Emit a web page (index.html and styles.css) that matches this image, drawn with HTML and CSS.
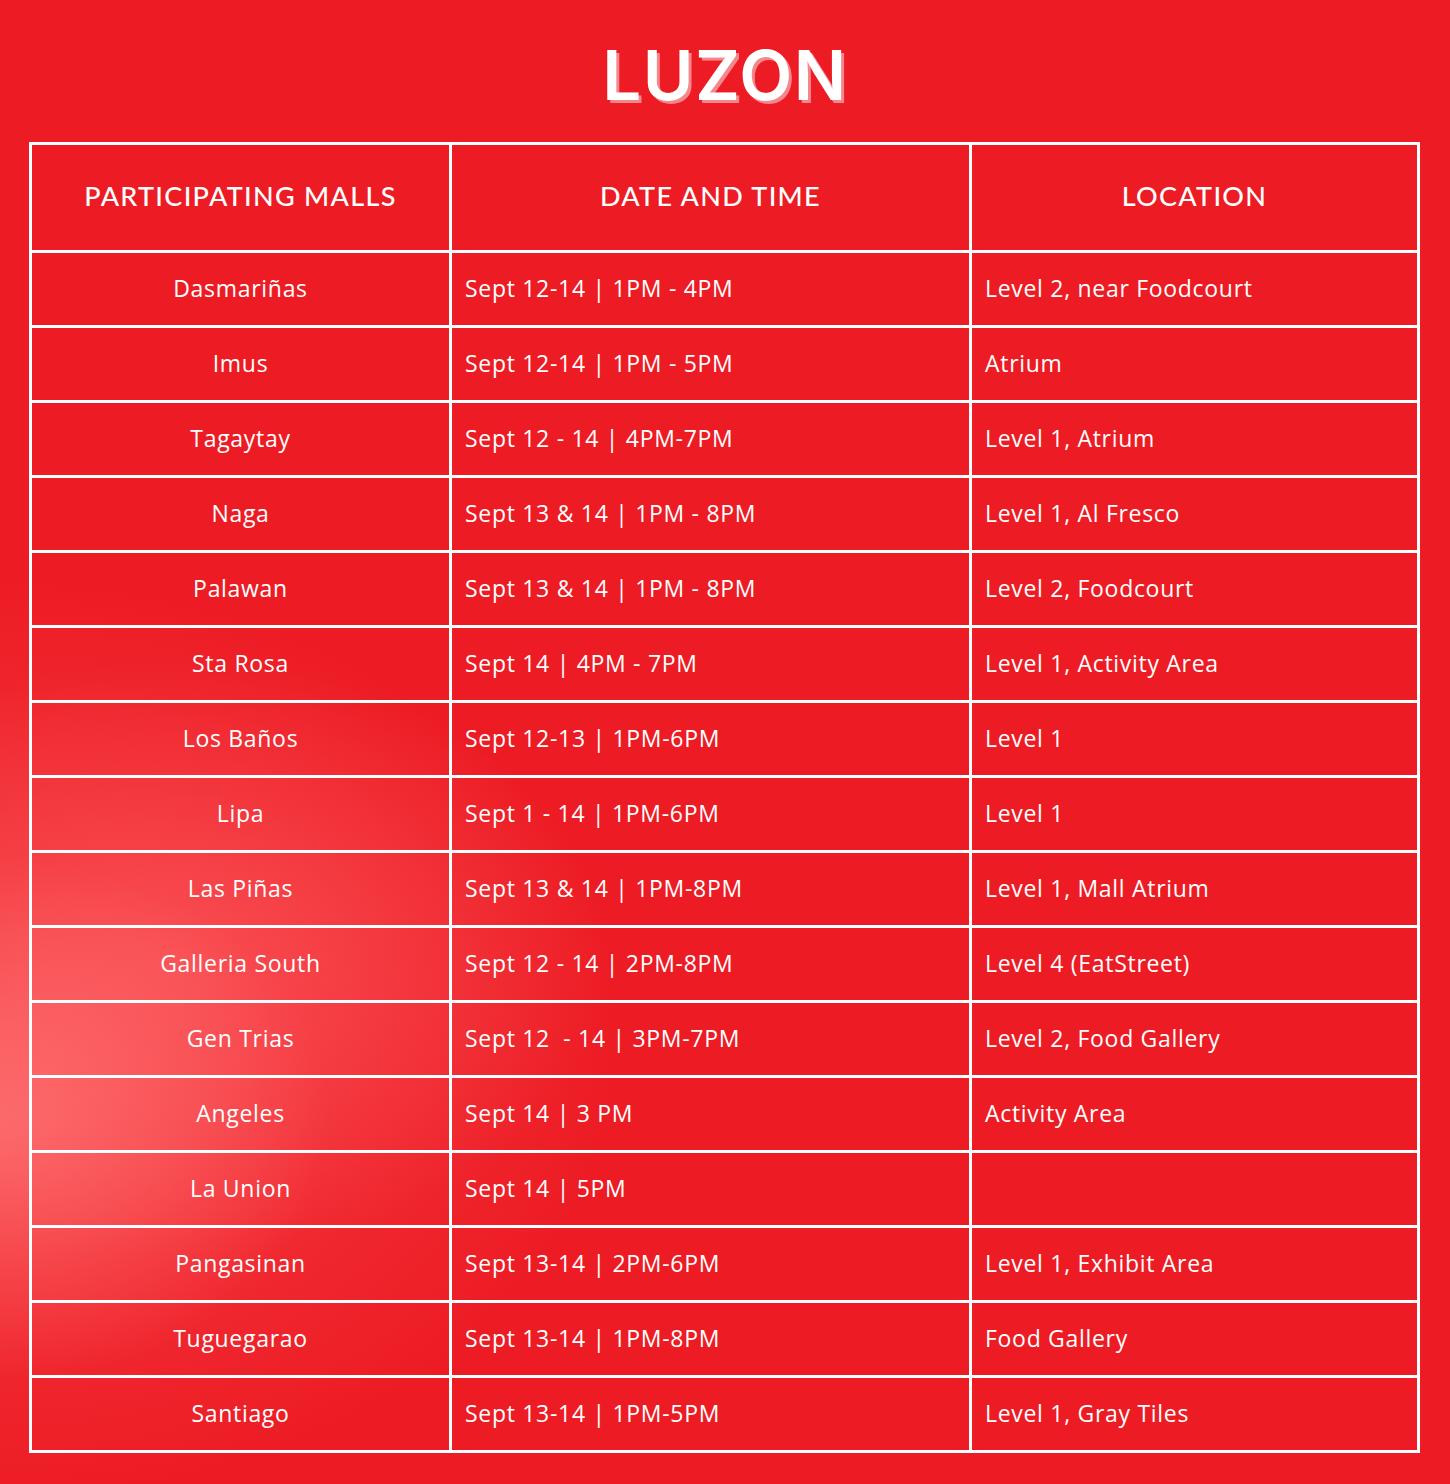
FILE: index.html
```html
<!DOCTYPE html>
<html lang="en">
<head>
<meta charset="utf-8">
<title>Luzon</title>
<link rel="stylesheet" href="styles.css">
</head>
<body>
<main class="page">
  <h1 class="title">LUZON</h1>
  <div class="table">
    <div class="cell head">PARTICIPATING MALLS</div>
    <div class="cell head">DATE AND TIME</div>
    <div class="cell head">LOCATION</div>

    <div class="cell mall">Dasmariñas</div><div class="cell">Sept 12-14 | 1PM - 4PM</div><div class="cell">Level 2, near Foodcourt</div>
    <div class="cell mall">Imus</div><div class="cell">Sept 12-14 | 1PM - 5PM</div><div class="cell">Atrium</div>
    <div class="cell mall">Tagaytay</div><div class="cell">Sept 12 - 14 | 4PM-7PM</div><div class="cell">Level 1, Atrium</div>
    <div class="cell mall">Naga</div><div class="cell">Sept 13 &amp; 14 | 1PM - 8PM</div><div class="cell">Level 1, Al Fresco</div>
    <div class="cell mall">Palawan</div><div class="cell">Sept 13 &amp; 14 | 1PM - 8PM</div><div class="cell">Level 2, Foodcourt</div>
    <div class="cell mall">Sta Rosa</div><div class="cell">Sept 14 | 4PM - 7PM</div><div class="cell">Level 1, Activity Area</div>
    <div class="cell mall">Los Baños</div><div class="cell">Sept 12-13 | 1PM-6PM</div><div class="cell">Level 1</div>
    <div class="cell mall">Lipa</div><div class="cell">Sept 1 - 14 | 1PM-6PM</div><div class="cell">Level 1</div>
    <div class="cell mall">Las Piñas</div><div class="cell">Sept 13 &amp; 14 | 1PM-8PM</div><div class="cell">Level 1, Mall Atrium</div>
    <div class="cell mall">Galleria South</div><div class="cell">Sept 12 - 14 | 2PM-8PM</div><div class="cell">Level 4 (EatStreet)</div>
    <div class="cell mall">Gen Trias</div><div class="cell">Sept 12 &nbsp;- 14 | 3PM-7PM</div><div class="cell">Level 2, Food Gallery</div>
    <div class="cell mall">Angeles</div><div class="cell">Sept 14 | 3 PM</div><div class="cell">Activity Area</div>
    <div class="cell mall">La Union</div><div class="cell">Sept 14 | 5PM</div><div class="cell"></div>
    <div class="cell mall">Pangasinan</div><div class="cell">Sept 13-14 | 2PM-6PM</div><div class="cell">Level 1, Exhibit Area</div>
    <div class="cell mall">Tuguegarao</div><div class="cell">Sept 13-14 | 1PM-8PM</div><div class="cell">Food Gallery</div>
    <div class="cell mall">Santiago</div><div class="cell">Sept 13-14 | 1PM-5PM</div><div class="cell">Level 1, Gray Tiles</div>
  </div>
</main>
</body>
</html>
```

FILE: styles.css
```css
html, body {
  margin: 0;
  padding: 0;
}

body {
  width: 1450px;
  height: 1484px;
  overflow: hidden;
  background-color: #ed1c24;
  background-image:
    radial-gradient(ellipse 330px 260px at 0px 1120px, rgba(255, 120, 120, 0.75) 0%, rgba(255, 110, 110, 0) 100%),
    radial-gradient(ellipse 440px 300px at 170px 960px, rgba(255, 105, 108, 0.5) 0%, rgba(255, 100, 100, 0) 100%),
    radial-gradient(ellipse 620px 460px at 0px 1040px, rgba(250, 80, 86, 0.65) 0%, rgba(237, 28, 36, 0) 100%);
  color: #ffffff;
  font-family: "Open Sans", "Liberation Sans", sans-serif;
}

.page {
  display: flex;
  flex-direction: column;
  align-items: flex-start;
  padding: 0 0 0 29px;
}

.title {
  align-self: stretch;
  margin: 0;
  height: 142px;
  padding-right: 29px;
  padding-top: 8px;
  box-sizing: border-box;
  display: flex;
  align-items: center;
  justify-content: center;
  font-family: "Inter", "Liberation Sans", sans-serif;
  font-weight: 600;
  font-size: 69px;
  letter-spacing: 1.5px;
  line-height: 1;
  color: #ffffff;
  text-shadow: 3px 3px 0 #f4878c;
}

.table {
  display: grid;
  grid-template-columns: 420px 520px 448px;
  grid-template-rows: 108px repeat(16, 75px);
  border-top: 3px solid #ffffff;
  border-left: 3px solid #ffffff;
}

.cell {
  border-right: 3px solid #ffffff;
  border-bottom: 3px solid #ffffff;
  display: flex;
  align-items: center;
  padding-left: 13px;
  padding-bottom: 3px;
  font-size: 23px;
  font-weight: 500;
  letter-spacing: 0.7px;
  white-space: pre;
}

.cell.head {
  justify-content: center;
  padding-left: 0;
  padding-bottom: 4px;
  font-family: "Lato", "Liberation Sans", sans-serif;
  font-size: 27px;
  font-weight: 500;
  letter-spacing: 1.3px;
}

.cell.mall {
  justify-content: center;
  padding-left: 0;
}
```
